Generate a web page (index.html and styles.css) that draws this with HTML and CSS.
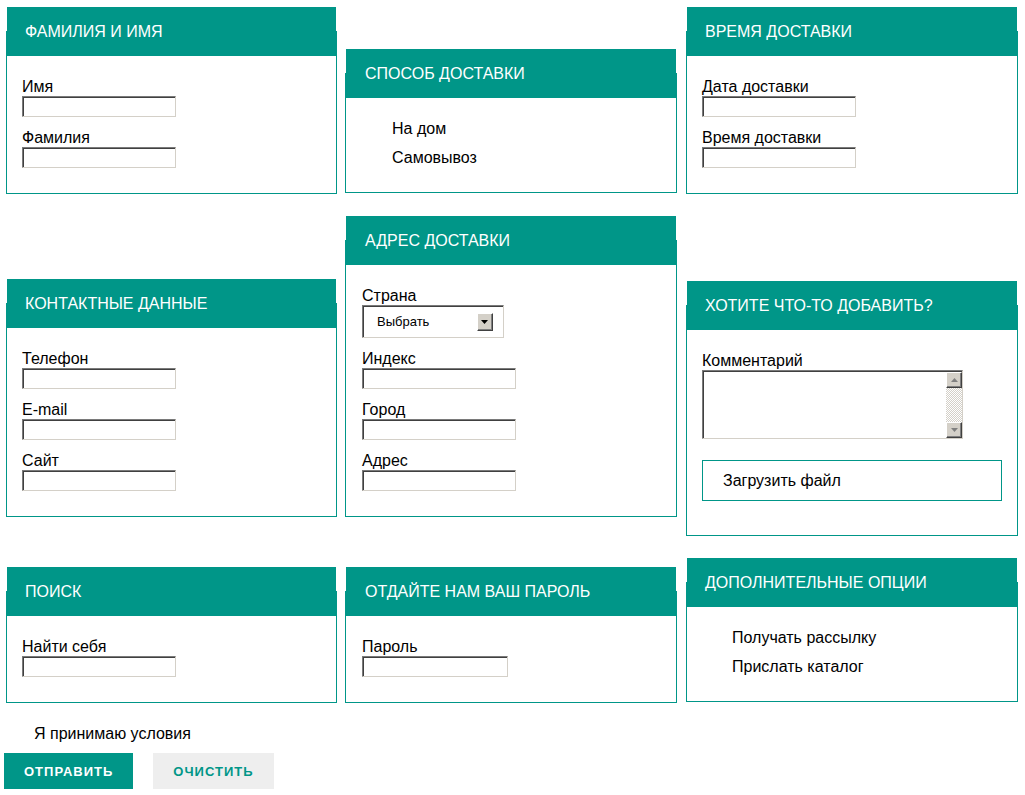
FILE: index.html
```html
<!DOCTYPE html>
<html lang="ru">
<head>
<meta charset="utf-8">
<title>Форма заказа</title>
<link rel="stylesheet" href="styles.css">
</head>
<body>
<form class="form">
  <div class="row">
    <fieldset class="box">
      <legend class="box-title">Фамилия и имя</legend>
      <div class="box-body">
        <div class="field"><label class="field-label">Имя</label><input class="text" type="text"></div>
        <div class="field"><label class="field-label">Фамилия</label><input class="text" type="text"></div>
      </div>
    </fieldset>
    <fieldset class="box shift-42">
      <legend class="box-title">Способ доставки</legend>
      <div class="box-body">
        <label class="option"><input class="hidden" type="radio" name="d">На дом</label>
        <label class="option"><input class="hidden" type="radio" name="d">Самовывоз</label>
      </div>
    </fieldset>
    <fieldset class="box">
      <legend class="box-title">Время доставки</legend>
      <div class="box-body">
        <div class="field"><label class="field-label">Дата доставки</label><input class="text" type="text"></div>
        <div class="field"><label class="field-label">Время доставки</label><input class="text" type="text"></div>
      </div>
    </fieldset>
  </div>

  <div class="row">
    <fieldset class="box shift-63">
      <legend class="box-title">Контактные данные</legend>
      <div class="box-body">
        <div class="field"><label class="field-label">Телефон</label><input class="text" type="text"></div>
        <div class="field"><label class="field-label">E-mail</label><input class="text" type="text"></div>
        <div class="field"><label class="field-label">Сайт</label><input class="text" type="text"></div>
      </div>
    </fieldset>
    <fieldset class="box">
      <legend class="box-title">Адрес доставки</legend>
      <div class="box-body">
        <div class="field"><label class="field-label">Страна</label>
          <div class="select">
            <span class="select-value">Выбрать</span>
            <span class="select-btn"><svg width="8" height="4" viewBox="0 0 8 4"><path d="M0 0h7L3.5 4z" fill="#000"/></svg></span>
          </div>
        </div>
        <div class="field"><label class="field-label">Индекс</label><input class="text" type="text"></div>
        <div class="field"><label class="field-label">Город</label><input class="text" type="text"></div>
        <div class="field"><label class="field-label">Адрес</label><input class="text" type="text"></div>
      </div>
    </fieldset>
    <fieldset class="box shift-65">
      <legend class="box-title">Хотите что-то добавить?</legend>
      <div class="box-body">
        <div class="field"><label class="field-label">Комментарий</label>
          <div class="area">
            <textarea class="area-input"></textarea>
            <div class="scrollbar">
              <span class="sb-btn"><svg width="7" height="4" viewBox="0 0 7 4"><path d="M3.5 0L7 4H0z" fill="#808080"/></svg></span>
              <span class="sb-track"></span>
              <span class="sb-btn"><svg width="7" height="4" viewBox="0 0 7 4"><path d="M0 0h7L3.5 4z" fill="#808080"/></svg></span>
            </div>
          </div>
        </div>
        <label class="file">Загрузить файл<input class="hidden" type="file"></label>
      </div>
    </fieldset>
  </div>

  <div class="row">
    <fieldset class="box shift-9">
      <legend class="box-title">Поиск</legend>
      <div class="box-body">
        <div class="field"><label class="field-label">Найти себя</label><input class="text" type="text"></div>
      </div>
    </fieldset>
    <fieldset class="box shift-9">
      <legend class="box-title">Отдайте нам ваш пароль</legend>
      <div class="box-body">
        <div class="field"><label class="field-label">Пароль</label><input class="text text-pass" type="password"></div>
      </div>
    </fieldset>
    <fieldset class="box">
      <legend class="box-title">Дополнительные опции</legend>
      <div class="box-body">
        <label class="option"><input class="hidden" type="checkbox">Получать рассылку</label>
        <label class="option"><input class="hidden" type="checkbox">Прислать каталог</label>
      </div>
    </fieldset>
  </div>

  <label class="terms"><input class="hidden" type="checkbox">Я принимаю условия</label>
  <div class="actions">
    <button class="btn btn-primary" type="submit">Отправить</button>
    <button class="btn btn-secondary" type="reset">Очистить</button>
  </div>
</form>
</body>
</html>
```

FILE: styles.css
```css
html, body {
  margin: 0;
  padding: 0;
  background: #fff;
}
body {
  font-family: "Liberation Sans", Arial, sans-serif;
  font-size: 16px;
  color: #000;
}
.form {
  padding: 7px 0 0 4px;
}
.row {
  display: flex;
  align-items: flex-start;
  column-gap: 8px;
  margin-left: 2px;
  margin-bottom: 22px;
}
.row:nth-of-type(3) {
  margin-bottom: 21px;
}
.box {
  box-sizing: border-box;
  width: 331px;
  margin: 0;
  padding: 0;
  border: 1px solid #009688;
  min-width: 0;
}
.box + .box {
  width: 332px;
}
.box:last-child {
  margin-left: 1px;
}
.shift-9 { margin-top: 9px; }
.shift-42 { margin-top: 42px; }
.shift-63 { margin-top: 63px; }
.shift-65 { margin-top: 65px; }
.box-title {
  box-sizing: border-box;
  width: 100%;
  height: 49px;
  line-height: 49px;
  padding: 0 18px;
  margin: 0;
  background: #009688;
  color: #fff;
  font-size: 16px;
  text-transform: uppercase;
  white-space: nowrap;
}
.box-body {
  padding: 21px 15px 25px;
}
.box:nth-child(2) .box-title {
  padding-left: 19px;
}
.box:nth-child(2) .box-body {
  padding-left: 16px;
}
.field + .field {
  margin-top: 11px;
}
.field-label {
  display: block;
  line-height: 19px;
}
.text {
  display: block;
  box-sizing: border-box;
  width: 154px;
  height: 21px;
  margin: 0;
  padding: 0 3px;
  border: 1px solid;
  border-color: #7a7a7a #d4d0c8 #d4d0c8 #7a7a7a;
  box-shadow: inset 1px 1px 0 #404040;
  background: #fff;
  font: 13px "Liberation Sans", Arial, sans-serif;
  outline: none;
}
.text-pass {
  width: 146px;
}
.hidden {
  display: none;
}
.option {
  display: block;
  line-height: 19px;
  padding-left: 30px;
}
.option + .option {
  margin-top: 9.5px;
}
.select {
  position: relative;
  box-sizing: border-box;
  width: 142px;
  height: 33px;
  border: 1px solid;
  border-color: #7a7a7a #d4d0c8 #d4d0c8 #7a7a7a;
  box-shadow: inset 1px 1px 0 #404040;
  display: flex;
  align-items: center;
  padding-left: 14px;
  font-size: 13px;
}
.select-btn {
  position: absolute;
  right: 10px;
  top: 7px;
  box-sizing: border-box;
  width: 16px;
  height: 18px;
  background: #d4d0c8;
  border: 1px solid;
  border-color: #fff #404040 #404040 #fff;
  box-shadow: inset -1px -1px 0 #808080;
  display: flex;
  align-items: center;
  justify-content: center;
}
.area {
  position: relative;
  width: 261px;
  height: 69px;
}
.area-input {
  display: block;
  box-sizing: border-box;
  width: 261px;
  height: 69px;
  margin: 0;
  padding: 2px;
  resize: none;
  overflow: hidden;
  border: 1px solid;
  border-color: #7a7a7a #d4d0c8 #d4d0c8 #7a7a7a;
  box-shadow: inset 1px 1px 0 #404040;
  font: 13px "Liberation Sans", Arial, sans-serif;
  outline: none;
}
.scrollbar {
  position: absolute;
  top: 2px;
  right: 1px;
  bottom: 1px;
  width: 16px;
  display: flex;
  flex-direction: column;
}
.sb-btn {
  box-sizing: border-box;
  height: 16px;
  background: #d4d0c8;
  border: 1px solid;
  border-color: #fff #404040 #404040 #fff;
  box-shadow: inset -1px -1px 0 #808080;
  display: flex;
  align-items: center;
  justify-content: center;
}
.sb-track {
  flex: 1;
  background-color: #e8e6e1;
  background-image: repeating-conic-gradient(#d4d0c8 0 25%, #fff 0 50%);
  background-size: 2px 2px;
}
.file {
  display: flex;
  align-items: center;
  box-sizing: border-box;
  width: 300px;
  height: 41px;
  margin-top: 21px;
  margin-bottom: 9px;
  padding-left: 20px;
  border: 1px solid #009688;
}
.terms {
  display: block;
  line-height: 19px;
  padding-left: 30px;
}
.actions {
  display: flex;
  gap: 20px;
  margin-top: 10px;
}
.btn {
  height: 36px;
  margin: 0;
  padding: 0 20px;
  border: 0;
  font: bold 13px "Liberation Sans", Arial, sans-serif;
  letter-spacing: 1px;
  text-transform: uppercase;
  cursor: pointer;
}
.btn-primary {
  background: #009688;
  color: #fff;
}
.btn-secondary {
  background: #eeeeee;
  color: #009688;
}
```
